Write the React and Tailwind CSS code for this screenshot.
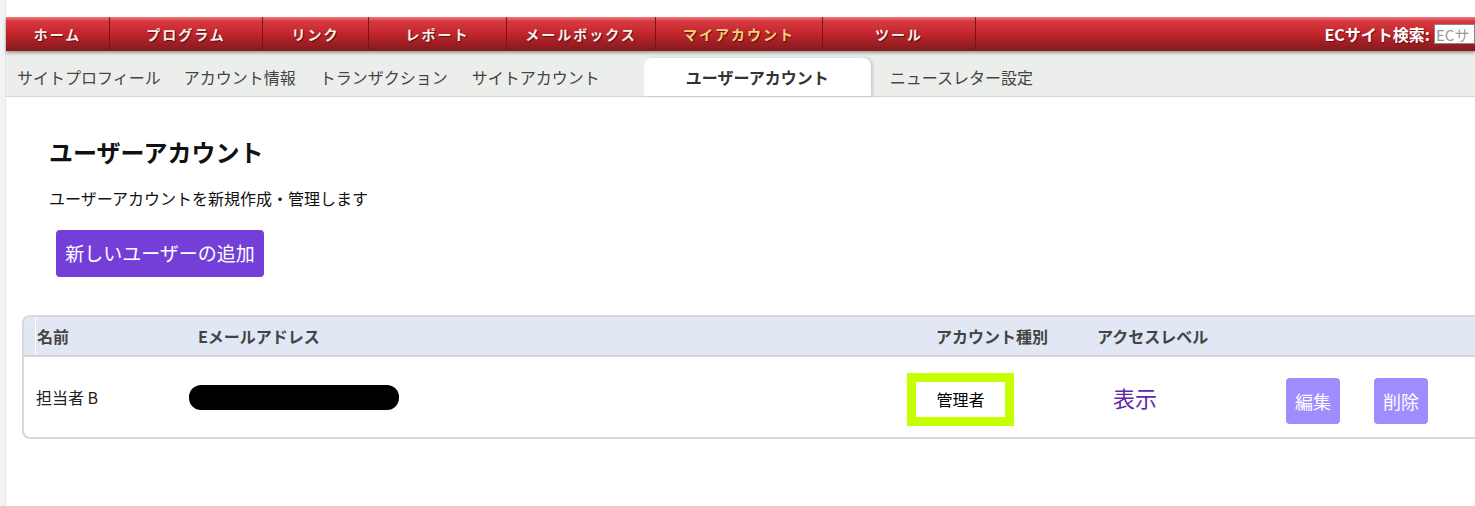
import React from 'react';

const jp = { fontFamily: '"Noto Sans CJK JP", "Noto Sans", sans-serif' };

const navItems = [
    { label: 'ホーム', w: 'w-[104px]' },
    { label: 'プログラム', w: 'w-[153px]' },
    { label: 'リンク', w: 'w-[106px]' },
    { label: 'レポート', w: 'w-[138px]' },
    { label: 'メールボックス', w: 'w-[149px]' },
    { label: 'マイアカウント', w: 'w-[167px]', active: true },
    { label: 'ツール', w: 'w-[153px]' },
];

function TopNav() {
    return (
        <div className="relative z-10 flex h-[34px] overflow-hidden bg-[linear-gradient(to_bottom,#f27a7e_0%,#d63a40_12%,#c6272e_45%,#a11f24_75%,#821a1e_100%)] shadow-[0_2px_3px_rgba(0,0,0,0.35)]">
            {navItems.map((item) => (
                <div
                    key={item.label}
                    className={`${item.w} flex shrink-0 items-center justify-center border-r border-[#7a1216] text-[14px] font-bold tracking-[2px] [text-shadow:1px_1px_1px_rgba(60,0,0,0.7)] ${item.active ? 'text-[#f3d27a]' : 'text-[#f4f0f0]'}`}
                >
                    {item.label}
                </div>
            ))}
            <div className="ml-auto flex shrink-0 items-center gap-[4px]">
                <span className="text-[16px] font-bold text-white [text-shadow:1px_1px_1px_rgba(60,0,0,0.6)]">ECサイト検索:</span>
                <div className="flex h-[20px] w-[41px] items-center overflow-hidden border border-[#888] bg-white pl-[1px] text-[15px] leading-none whitespace-nowrap text-[#9a9a9a]">
                    ECサ
                </div>
            </div>
        </div>
    );
}

function SubNav() {
    return (
        <div className="flex h-[46px] items-end border-b border-[#d6d6d6] bg-[#eceeec] text-[16px] text-[#444]">
            <div className="flex h-[38px] items-center pl-[11px]">
                <span className="mr-[23px]">サイトプロフィール</span>
                <span className="mr-[24px]">アカウント情報</span>
                <span className="mr-[24px]">トランザクション</span>
                <span>サイトアカウント</span>
            </div>
            <div className="ml-[44px] flex h-[38px] w-[227px] items-center justify-center rounded-t-[8px] bg-white font-bold text-[#333] shadow-[2px_0_3px_rgba(0,0,0,0.15)]">
                ユーザーアカウント
            </div>
            <div className="ml-[19px] flex h-[38px] items-center">ニュースレター設定</div>
        </div>
    );
}

function UserTable() {
    return (
        <div className="ml-[16px] mt-[38px] rounded-l-[8px] border-y-2 border-l-2 border-[#d9d9d9] text-[#222]">
            <div className="grid h-[40px] grid-cols-[174px_738px_161px_1fr] items-center rounded-tl-[6px] border-b-2 border-[#d4d4d4] bg-[#e1e8f3] text-[16px] font-bold text-[#444]">
                <div className="ml-[11px] flex h-full items-center border-l border-white pl-[1px]">名前</div>
                <div>Eメールアドレス</div>
                <div>アカウント種別</div>
                <div>アクセスレベル</div>
            </div>
            <div className="flex h-[80px] items-center text-[16px]">
                <div className="w-[165px] shrink-0 pl-[12px]">担当者 B</div>
                <div className="h-[25px] w-[210px] shrink-0 rounded-[12px] bg-black" />
                <div className="ml-[508px] mt-[4px] flex h-[53px] w-[107px] shrink-0 items-center justify-center border-[9px] border-[#c6ff00] bg-white text-[16px] text-black">
                    管理者
                </div>
                <div className="ml-[99px] text-[22px] text-[#5b2aa8]">表示</div>
                <button className="ml-[129px] mt-[8px] h-[46px] w-[54px] rounded-[4px] bg-[#a08cff] text-[18px] text-white">編集</button>
                <button className="ml-[34px] mt-[8px] h-[46px] w-[54px] rounded-[4px] bg-[#a08cff] text-[18px] text-white">削除</button>
            </div>
        </div>
    );
}

export default function App() {
    return (
        <div className="flex h-[506px] w-[1475px] overflow-hidden bg-white" style={jp}>
            <div className="w-[6px] shrink-0 border-r border-[#e6e6e6] bg-[#f3f3f3]" />
            <div className="min-w-0 flex-1">
                <div className="h-[17px]" />
                <TopNav />
                <SubNav />
                <div className="pt-[37px]">
                    <div className="pl-[43px]">
                        <h1 className="text-[24px] font-bold leading-[36px] text-[#111]">ユーザーアカウント</h1>
                        <p className="mt-[16px] text-[16px] leading-[24px] text-[#111]">ユーザーアカウントを新規作成・管理します</p>
                        <button className="ml-[7px] mt-[20px] h-[47px] w-[208px] rounded-[4px] bg-[#743fd8] text-[19px] text-white">
                            新しいユーザーの追加
                        </button>
                    </div>
                    <UserTable />
                </div>
            </div>
        </div>
    );
}
